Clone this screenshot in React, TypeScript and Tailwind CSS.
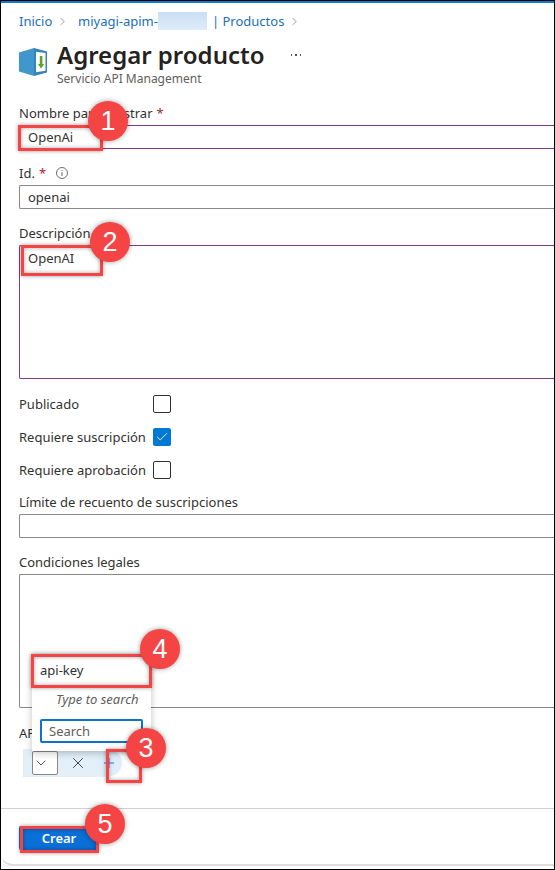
import type { ReactNode } from 'react';
import { Check, ChevronDown, ChevronRight, Plus, X } from 'lucide-react';

function Label({ children, required, className = '' }: { children: ReactNode; required?: boolean; className?: string }) {
  return (
    <div className={`flex h-6 items-center ${className}`}>
      <span>{children}</span>
      {required && <span className="ml-1 text-[#a4262c]">*</span>}
    </div>
  );
}

function CheckRow({ label, checked, className = '' }: { label: string; checked?: boolean; className?: string }) {
  return (
    <div className="flex h-[33px] items-center">
      <span className={`w-[134px] ${className}`}>{label}</span>
      {checked ? (
        <span className="flex size-[18px] items-center justify-center rounded-xs bg-[#0078d4] text-white">
          <Check size={14} strokeWidth={1.5} />
        </span>
      ) : (
        <span className="size-[18px] rounded-xs border border-[#323130]" />
      )}
    </div>
  );
}

function Frame({ className }: { className: string }) {
  return (
    <div
      className={`absolute border-3 border-[#f44444] shadow-[0_0_4px_rgba(0,0,0,0.4),inset_0_0_4px_rgba(0,0,0,0.35)] ${className}`}
    />
  );
}

function Step({ n, className }: { n: number; className: string }) {
  return (
    <div
      className={`absolute flex size-10 items-center justify-center rounded-full bg-[#f44444] font-['Liberation_Sans',sans-serif] text-[27px] leading-none text-white shadow-[0_0_5px_rgba(0,0,0,0.4)] ${className}`}
    >
      {n}
    </div>
  );
}

function ProductIcon() {
  return (
    <svg width="28" height="28" viewBox="0 0 28 28">
      <path d="M0 4.5 15 0v28L0 23.5z" fill="#3f97cc" />
      <path d="M15 0l13 3.5v21L15 28z" fill="#3584b8" />
      <path d="M17 3.8 26.5 5v17.8L17 24.2z" fill="#fff" />
      <path d="M20.8 8h2.6v8h1.8L22 20.5 19 16h1.8z" fill="#5ea41c" />
    </svg>
  );
}

export default function App() {
  return (
    <div className="relative h-[870px] w-[555px] overflow-hidden border border-black bg-white font-['Noto_Sans',sans-serif] text-[13px] leading-[18px] whitespace-nowrap text-[#323130]">
      <div className="h-0.5 bg-[#0f78d0]" />
      <main className="flex h-[863px] flex-col rounded-bl-xl border-b-2 border-[#dedede]">
        <nav className="flex h-9 items-center pl-[18px] text-[#1b6fb8]">
          <span className="w-[33px]">Inicio</span>
          <ChevronRight size={13} strokeWidth={1.3} className="mr-[9px] ml-[4px] text-[#707070]" />
          <span>miyagi-apim-</span>
          <span className="h-[18px] w-[49px] bg-linear-to-b from-[#c8dff5] to-[#dfecf9]" />
          <span className="ml-[5px]">| Productos</span>
          <ChevronRight size={13} strokeWidth={1.3} className="ml-[4px] text-[#707070]" />
        </nav>

        <header className="flex h-[62px] pl-[18px]">
          <div className="mr-[10px] pt-[9px]">
            <ProductIcon />
          </div>
          <div>
            <h1 className="text-[24px] leading-[32px] font-semibold text-[#242220]">Agregar producto</h1>
            <p className="text-[12px] leading-4 text-[#605e5c]">Servicio API Management</p>
          </div>
          <div className="ml-[26px] flex gap-[3px] pt-[15px]">
            <i className="size-[1.5px] bg-[#555]" />
            <i className="size-[1.5px] bg-[#555]" />
            <i className="size-[1.5px] bg-[#555]" />
          </div>
        </header>

        <form className="flex flex-col pl-[18px]">
          <Label required>Nombre para mostrar</Label>
          <div className="flex h-6 items-center rounded-l-xs border border-r-0 border-[#7a3b94] pl-2">OpenAi</div>

          <div className="mt-3 flex items-center">
            <Label required>Id.</Label>
            <svg className="ml-[10px]" width="12" height="12" viewBox="0 0 12 12" fill="none" stroke="#605e5c">
              <circle cx="6" cy="6" r="5.5" strokeWidth="0.9" />
              <path d="M6 5.2V9M6 3v1.1" />
            </svg>
          </div>
          <div className="flex h-6 items-center rounded-l-xs border border-r-0 border-[#8a8886] pl-2">openai</div>

          <Label required className="mt-3">Descripción</Label>
          <div className="h-[134px] rounded-l-xs border border-r-0 border-[#7a3b94] pt-[3px] pl-2">OpenAI</div>

          <div className="mt-2">
            <CheckRow label="Publicado" />
            <CheckRow label="Requiere suscripción" checked />
            <CheckRow label="Requiere aprobación" />
          </div>

          <Label className="mt-1">Límite de recuento de suscripciones</Label>
          <div className="h-6 rounded-l-xs border border-r-0 border-[#8a8886]" />

          <Label className="mt-3">Condiciones legales</Label>
          <div className="h-[134px] rounded-l-xs border border-r-0 border-[#8a8886]" />

          <Label className="mt-[13px]">API</Label>
          <div className="mt-1 ml-1 flex h-7 w-[84px] items-center bg-[#e3f0fa]">
            <span className="ml-[9px] flex h-6 w-10 items-center justify-end rounded-xs border border-[#8a8886] bg-white pr-2">
              <ChevronDown size={16} strokeWidth={1.2} />
            </span>
            <X size={18} strokeWidth={1.2} className="ml-[11px] shrink-0" />
            <span className="ml-[9px] flex size-[26px] shrink-0 items-center justify-center rounded-full bg-[#e0edfb] text-[#2b78e4]">
              <Plus size={16} strokeWidth={1.5} />
            </span>
          </div>
        </form>

        <footer className="mt-[31px] border-t border-[#d0d0d0] pt-[17px] pl-[18px]">
          <button className="h-6 w-20 rounded-xs bg-[#0b6fd8] text-[13px] leading-none font-semibold text-white">Crear</button>
        </footer>
      </main>

      <div className="absolute top-[653px] left-[31px] flex h-[97px] w-[119px] flex-col bg-white shadow-[0_2px_7px_rgba(0,0,0,0.25)]">
        <div className="flex h-8 items-center pl-2">api-key</div>
        <div className="flex h-[26px] items-center pl-6 text-[#605e5c] italic">Type to search</div>
        <div className="mt-[7px] ml-2 flex h-6 w-[103px] items-center rounded-xs border-2 border-[#0f72cc] pl-[7px] text-[#605e5c]">Search</div>
      </div>

      <Frame className="top-[124px] left-[17px] h-[26px] w-[85px]" />
      <Frame className="top-[244px] left-[20px] h-[31px] w-[82px]" />
      <Frame className="top-[653px] left-[30px] h-[34px] w-[121px]" />
      <Frame className="top-[748px] left-[105px] h-[34px] w-[36px]" />
      <Frame className="top-[825px] left-[19px] h-[27px] w-[79px]" />
      <Step n={1} className="top-[100px] left-[87px]" />
      <Step n={2} className="top-[221px] left-[89px]" />
      <Step n={3} className="top-[727px] left-[125px]" />
      <Step n={4} className="top-[628px] left-[139px]" />
      <Step n={5} className="top-[803px] left-[84px]" />
    </div>
  );
}
